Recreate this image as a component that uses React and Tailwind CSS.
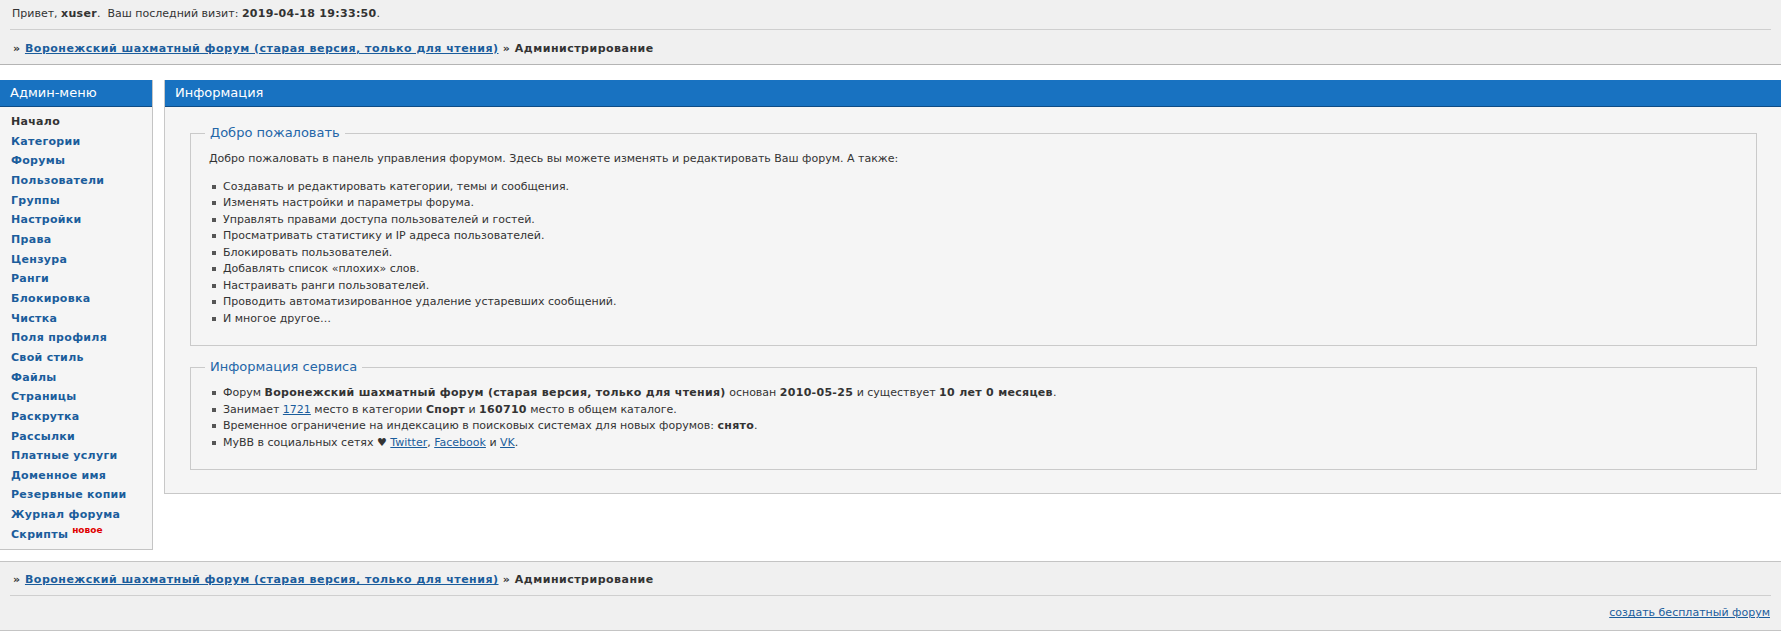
const menu = [
  'Начало',
  'Категории',
  'Форумы',
  'Пользователи',
  'Группы',
  'Настройки',
  'Права',
  'Цензура',
  'Ранги',
  'Блокировка',
  'Чистка',
  'Поля профиля',
  'Свой стиль',
  'Файлы',
  'Страницы',
  'Раскрутка',
  'Рассылки',
  'Платные услуги',
  'Доменное имя',
  'Резервные копии',
  'Журнал форума',
  'Скрипты',
];

const abilities = [
  'Создавать и редактировать категории, темы и сообщения.',
  'Изменять настройки и параметры форума.',
  'Управлять правами доступа пользователей и гостей.',
  'Просматривать статистику и IP адреса пользователей.',
  'Блокировать пользователей.',
  'Добавлять список «плохих» слов.',
  'Настраивать ранги пользователей.',
  'Проводить автоматизированное удаление устаревших сообщений.',
  'И многое другое…',
];

const FORUM = 'Воронежский шахматный форум (старая версия, только для чтения)';

// bold text in the original is Verdana Bold, a touch wider than DejaVu
function B({ children }) {
  return <b className="tracking-[0.3px]">{children}</b>;
}

function Crumbs() {
  return (
    <div className="font-bold text-[11px] tracking-[0.5px]">
      <span className="text-[#333]">» </span>
      <a href="#" className="text-[#1b5d9c] underline">{FORUM}</a>
      <span className="text-[#333]"> » Администрирование</span>
    </div>
  );
}

function Bullet({ children }) {
  return (
    <li className="flex items-center h-[16.5px]">
      <span className="w-[4px] h-[4px] bg-[#555] ml-[3px] mr-[7px] shrink-0"></span>
      <span>{children}</span>
    </li>
  );
}

function Box({ title, children }) {
  return (
    <fieldset className="border border-[#cacaca] px-[18px] pt-[10px] pb-[18px] min-w-0">
      <legend className="ml-[-4px] px-[5px] text-[13px] leading-[16px] text-[#2466a8]">{title}</legend>
      {children}
    </fieldset>
  );
}

export default function App() {
  return (
    <div className="min-h-[633px] bg-white font-['DejaVu_Sans',Verdana,sans-serif] text-[11px] text-[#333]">
      {/* top bar */}
      <div className="bg-[#f0f0f0] border-b border-[#b4b4b4] px-[10px]">
        <div className="h-[30px] flex items-center px-[2px] border-b border-[#cfcfcf]">
          <span>
            Привет, <B>xuser</B>.&nbsp;&nbsp;Ваш последний визит: <B>2019-04-18 19:33:50</B>.
          </span>
        </div>
        <div className="h-[34px] pt-[4px] flex items-center px-[3px]">
          <Crumbs />
        </div>
      </div>

      {/* body */}
      <div className="flex items-start gap-[11px] mt-[15px]">
        <div className="w-[153px] shrink-0 bg-[#f5f5f5] border-r border-b border-[#c4c4c4]">
          <div className="h-[27px] bg-[#1872c1] border-b border-[#0e4c86] text-white text-[13px] flex items-center px-[10px]">
            Админ-меню
          </div>
          <ul className="pt-[5px] pb-[5px] pl-[11px]">
            {menu.map((item, i) => (
              <li key={item} className="h-[19.67px] leading-[19.67px] font-bold tracking-[0.3px] whitespace-nowrap">
                {i === 0 ? (
                  <span className="text-[#333]">{item}</span>
                ) : (
                  <a href="#" className="text-[#1b5d9c]">{item}</a>
                )}
                {item === 'Скрипты' && (
                  <span className="relative top-[-5px] ml-[4px] text-[9px] tracking-normal text-[#e00000]">новое</span>
                )}
              </li>
            ))}
          </ul>
        </div>

        <div className="flex-1 bg-[#f5f5f5] border-l border-b border-[#c8c8c8]">
          <div className="h-[27px] bg-[#1872c1] border-b border-[#0e4c86] text-white text-[13px] flex items-center px-[10px]">
            Информация
          </div>
          <div className="pt-[18px] pb-[23px] pl-[25px] pr-[24px] flex flex-col gap-[13px]">
            <Box title="Добро пожаловать">
              <p className="leading-[16.5px] mb-[11px]">
                Добро пожаловать в панель управления форумом. Здесь вы можете изменять и редактировать Ваш форум. А также:
              </p>
              <ul>
                {abilities.map(a => <Bullet key={a}>{a}</Bullet>)}
              </ul>
            </Box>
            <Box title="Информация сервиса">
              <ul>
                <Bullet>
                  Форум <B>{FORUM}</B> основан <B>2010-05-25</B> и существует <B>10 лет 0 месяцев</B>.
                </Bullet>
                <Bullet>
                  Занимает <a href="#" className="text-[#1b5d9c] underline">1721</a> место в категории <B>Спорт</B> и <B>160710</B> место в общем каталоге.
                </Bullet>
                <Bullet>
                  Временное ограничение на индексацию в поисковых системах для новых форумов: <B>снято</B>.
                </Bullet>
                <Bullet>
                  MyBB в социальных сетях ♥ <a href="#" className="text-[#1b5d9c] underline">Twitter</a>, <a href="#" className="text-[#1b5d9c] underline">Facebook</a> и <a href="#" className="text-[#1b5d9c] underline">VK</a>.
                </Bullet>
              </ul>
            </Box>
          </div>
        </div>
      </div>

      {/* bottom bars */}
      <div className="mt-[11px] bg-[#f0f0f0] border-t border-b border-[#c4c4c4] px-[10px]">
        <div className="h-[34px] pt-[3px] flex items-center px-[3px] border-b border-[#cfcfcf]">
          <Crumbs />
        </div>
        <div className="h-[34px] flex items-center justify-end px-[1px]">
          <a href="#" className="text-[#1b5d9c] underline">создать бесплатный форум</a>
        </div>
      </div>
    </div>
  );
}
